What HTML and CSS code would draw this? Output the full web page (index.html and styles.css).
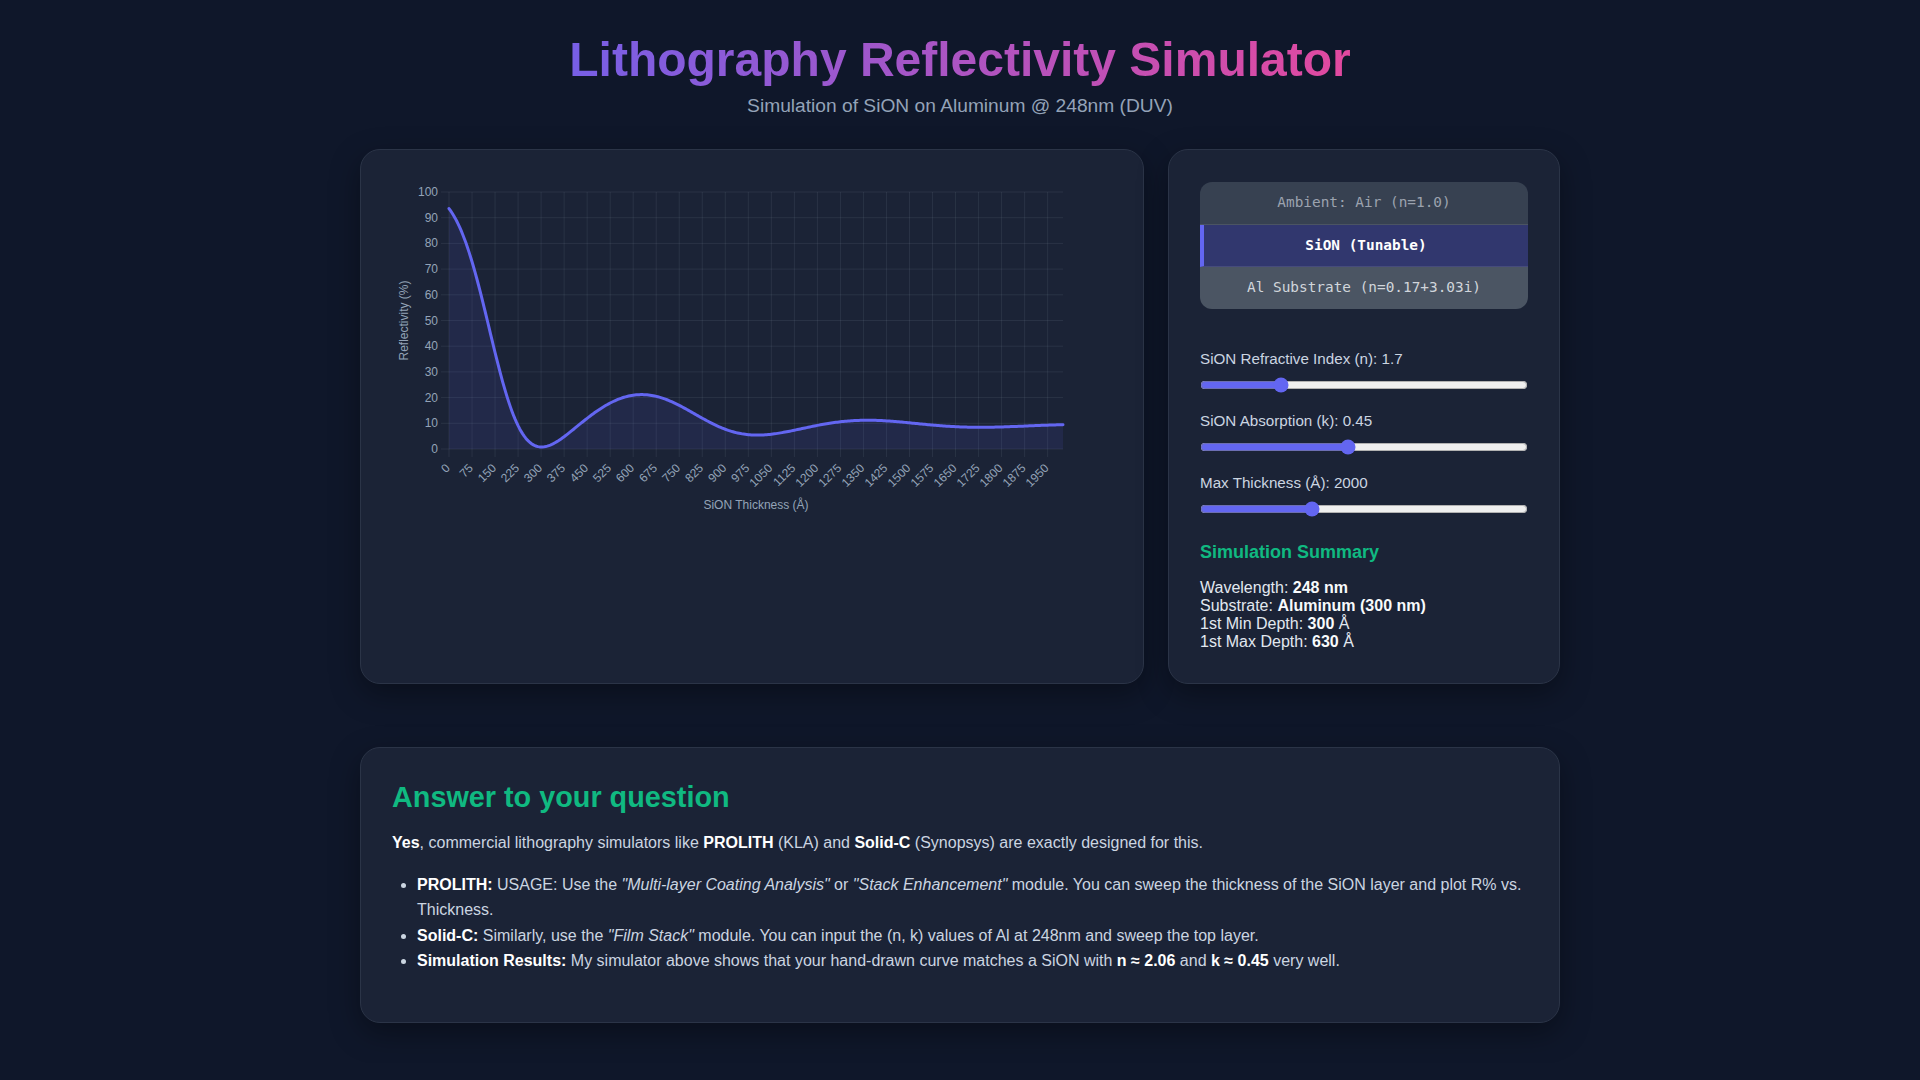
FILE: index.html
```html
<!DOCTYPE html>
<html lang="en">
<head>
<meta charset="utf-8">
<title>Lithography Reflectivity Simulator</title>
<link rel="stylesheet" href="styles.css">
</head>
<body>
<div class="page">
  <header class="header">
    <h1 class="title">Lithography Reflectivity Simulator</h1>
    <p class="subtitle">Simulation of SiON on Aluminum @ 248nm (DUV)</p>
  </header>

  <div class="grid">
    <section class="card chart-card">
      <svg id="chart" class="chart" viewBox="0 0 719 360" width="719" height="360" xmlns="http://www.w3.org/2000/svg"></svg>
    </section>

    <aside class="card controls">
      <div class="stack">
        <div class="layer layer-ambient">Ambient: Air (n=1.0)</div>
        <div class="layer layer-film">SiON (Tunable)</div>
        <div class="layer layer-substrate">Al Substrate (n=0.17+3.03i)</div>
      </div>

      <div class="control">
        <label class="control-label" for="nInput">SiON Refractive Index (n): <span id="nVal">1.7</span></label>
        <input class="slider" type="range" id="nInput" min="1" max="4" step="0.01" value="1.7">
      </div>
      <div class="control">
        <label class="control-label" for="kInput">SiON Absorption (k): <span id="kVal">0.45</span></label>
        <input class="slider" type="range" id="kInput" min="0" max="1" step="0.01" value="0.45">
      </div>
      <div class="control">
        <label class="control-label" for="tInput">Max Thickness (Å): <span id="tVal">2000</span></label>
        <input class="slider" type="range" id="tInput" min="500" max="5000" step="100" value="2000">
      </div>

      <h3 class="summary-title">Simulation Summary</h3>
      <div class="summary">
        <div>Wavelength: <b>248 nm</b></div>
        <div>Substrate: <b>Aluminum (300 nm)</b></div>
        <div>1st Min Depth: <b id="minDepth">300</b> Å</div>
        <div>1st Max Depth: <b id="maxDepth">630</b> Å</div>
      </div>
    </aside>
  </div>

  <section class="card answer">
    <h2 class="answer-title">Answer to your question</h2>
    <p class="answer-text"><b>Yes</b>, commercial lithography simulators like <b>PROLITH</b> (KLA) and <b>Solid-C</b> (Synopsys) are exactly designed for this.</p>
    <ul class="answer-list">
      <li><b>PROLITH:</b> USAGE: Use the <i>"Multi-layer Coating Analysis"</i> or <i>"Stack Enhancement"</i> module. You can sweep the thickness of the SiON layer and plot R% vs. Thickness.</li>
      <li><b>Solid-C:</b> Similarly, use the <i>"Film Stack"</i> module. You can input the (n, k) values of Al at 248nm and sweep the top layer.</li>
      <li><b>Simulation Results:</b> My simulator above shows that your hand-drawn curve matches a SiON with <b>n ≈ 2.06</b> and <b>k ≈ 0.45</b> very well.</li>
    </ul>
  </section>
</div>
<script src="script.js"></script>
</body>
</html>
```

FILE: styles.css
```css
* { box-sizing: border-box; }

html, body { margin: 0; padding: 0; }

body {
  background: #0f172a;
  color: #e2e8f0;
  font-family: "Liberation Sans", Arial, Helvetica, sans-serif;
}

.page {
  width: 1200px;
  margin: 0 auto;
  padding: 32px 0 40px;
}

.header {
  text-align: center;
  margin-bottom: 32px;
}

.title {
  width: fit-content;
  margin: 0 auto 8px;
  font-size: 48px;
  font-weight: 700;
  background: linear-gradient(90deg, #775fe6, #e2499f);
  -webkit-background-clip: text;
  background-clip: text;
  color: transparent;
}

.subtitle {
  margin: 0;
  font-size: 19.2px;
  color: #94a3b8;
}

.grid {
  display: grid;
  grid-template-columns: 2fr 1fr;
  gap: 24px;
  margin-bottom: 63px;
}

.card {
  background: #1b2336;
  border: 1px solid #2b3447;
  border-radius: 20px;
  padding: 32px;
  box-shadow: 0 10px 30px rgba(0, 0, 0, 0.35);
}

.chart-card { padding: 32px 31px; }

.chart {
  display: block;
  font-family: "Liberation Sans", Arial, Helvetica, sans-serif;
}

.controls { padding: 32px 31px; }

.stack {
  border-radius: 12px;
  overflow: hidden;
  margin-bottom: 41px;
  font-family: "DejaVu Sans Mono", "Liberation Mono", monospace;
  font-size: 14.4px;
  text-align: center;
}

.layer {
  padding: 12px;
  line-height: 17.7px;
  border-bottom: 1px solid rgba(255, 255, 255, 0.1);
}

.layer:last-child { border-bottom: 0; }

.layer-ambient {
  background: #374151;
  color: #9ca3af;
}

.layer-film {
  background: #31376e;
  color: #ffffff;
  font-weight: 700;
  border-left: 4px solid #6366f1;
}

.layer-substrate {
  background: #4b5563;
  color: #d1d5db;
}

.control { margin-bottom: 19px; }

.control-label {
  display: block;
  margin-bottom: 10px;
  font-size: 15.2px;
  color: #cbd5e1;
}

.slider {
  display: block;
  width: 100%;
  margin: 2px 0 4px;
  accent-color: #6366f1;
}

.summary-title {
  margin: 25px 0 16px;
  font-size: 18px;
  font-weight: 700;
  color: #10b981;
}

.summary {
  font-size: 16px;
  color: #e2e8f0;
}

.summary b { color: #f8fafc; }

.answer { padding: 33px 31px 32px; }

.answer-title {
  margin: 0;
  font-size: 28.8px;
  font-weight: 700;
  color: #10b981;
}

.answer-text {
  margin: 16px 0;
  font-size: 16px;
  line-height: 1.6;
  color: #cbd5e1;
}

.answer-list {
  margin: 16px 0;
  padding-left: 25px;
  font-size: 16px;
  line-height: 1.6;
  color: #cbd5e1;
}

.answer-text b, .answer-list b { color: #ffffff; }
```

FILE: script.js
```js
(function () {
  var NS = 'http://www.w3.org/2000/svg';
  var svg = document.getElementById('chart');
  var L = 57, R = 671, T = 10, B = 267;
  var LAMBDA = 2480;
  var DMAX = 2000;

  function cx(re, im) { return { re: re, im: im }; }
  function add(a, b) { return cx(a.re + b.re, a.im + b.im); }
  function sub(a, b) { return cx(a.re - b.re, a.im - b.im); }
  function mul(a, b) { return cx(a.re * b.re - a.im * b.im, a.re * b.im + a.im * b.re); }
  function div(a, b) {
    var d = b.re * b.re + b.im * b.im;
    return cx((a.re * b.re + a.im * b.im) / d, (a.im * b.re - a.re * b.im) / d);
  }
  function cexp(a) { var e = Math.exp(a.re); return cx(e * Math.cos(a.im), e * Math.sin(a.im)); }

  function reflectivity(n, k, d) {
    var n0 = cx(1, 0), n1 = cx(n, -k), n2 = cx(0.17, -3.03);
    var r01 = div(sub(n0, n1), add(n0, n1));
    var r12 = div(sub(n1, n2), add(n1, n2));
    var beta = mul(n1, cx(2 * Math.PI * d / LAMBDA, 0));
    var ph = cexp(mul(cx(0, -2), beta));
    var t = mul(r12, ph);
    var r = div(add(r01, t), add(cx(1, 0), mul(r01, t)));
    return (r.re * r.re + r.im * r.im) * 100;
  }

  function el(name, attrs, text) {
    var e = document.createElementNS(NS, name);
    for (var a in attrs) e.setAttribute(a, attrs[a]);
    if (text !== undefined) e.textContent = text;
    svg.appendChild(e);
    return e;
  }

  function yOf(v) { return B - v / 100 * (B - T); }
  function xOf(d) { return L + d / DMAX * (R - L); }

  var grid = 'rgba(148,163,184,0.12)';
  var tick = '#94a3b8';

  for (var v = 0; v <= 100; v += 10) {
    var y = yOf(v);
    el('line', { x1: L - 8, y1: y, x2: R, y2: y, stroke: grid, 'stroke-width': 1 });
    el('text', { x: L - 11, y: y + 4, 'text-anchor': 'end', 'font-size': 12, fill: tick }, String(v));
  }

  for (var i = 0; i <= 78; i += 3) {
    var d = i * 25;
    var x = xOf(d);
    el('line', { x1: x, y1: T, x2: x, y2: B + 8, stroke: grid, 'stroke-width': 1 });
    el('text', {
      x: x - 1, y: B + 21, 'text-anchor': 'end', 'font-size': 12, fill: tick,
      transform: 'rotate(-45 ' + (x - 1) + ' ' + (B + 17) + ')'
    }, String(d));
  }

  el('text', { x: 0, y: 0, 'text-anchor': 'middle', 'font-size': 12, fill: tick,
    transform: 'translate(16 ' + ((T + B) / 2) + ') rotate(-90)' }, 'Reflectivity (%)');
  el('text', { x: (L + R) / 2, y: 327, 'text-anchor': 'middle', 'font-size': 12, fill: tick }, 'SiON Thickness (Å)');

  var n = 1.7, k = 0.45;
  var pts = [];
  for (var dd = 0; dd <= DMAX; dd += 5) {
    pts.push(xOf(dd).toFixed(2) + ',' + yOf(reflectivity(n, k, dd)).toFixed(2));
  }
  var line = 'M' + pts.join(' L');
  el('path', { d: line + ' L' + R + ',' + B + ' L' + L + ',' + B + ' Z', fill: 'rgba(99,102,241,0.1)', stroke: 'none' });
  el('path', { d: line, fill: 'none', stroke: '#6366f1', 'stroke-width': 3, 'stroke-linejoin': 'round', 'stroke-linecap': 'round' });
})();
```
